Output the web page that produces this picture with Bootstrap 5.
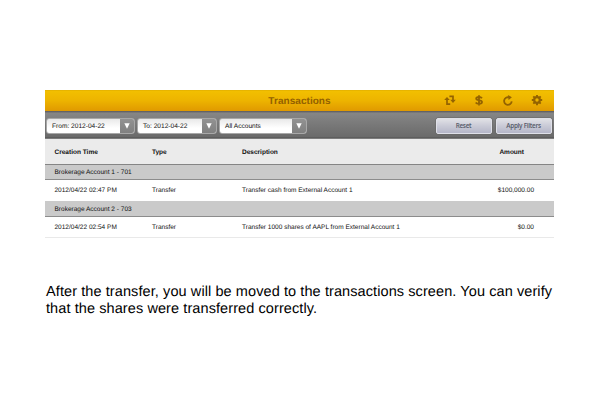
<!DOCTYPE html>
<html lang="en">
<head>
<meta charset="utf-8">
<meta name="viewport" content="width=device-width, initial-scale=1">
<title>Transactions</title>
<link href="https://cdn.jsdelivr.net/npm/bootstrap@5.3.0/dist/css/bootstrap.min.css" rel="stylesheet">
<style>
body { font-family: "Liberation Sans", Arial, sans-serif; font-size: 6.52px; line-height: 1; color: #111; background: #fff; overflow: hidden; text-rendering: geometricPrecision; }
.page { padding: 90px 46px 0 45px; }
.titlebar { height: 21px; background: linear-gradient(#dcaa00 0, #f2bf00 1px, #edb400 50%, #e09900); display: grid; grid-template-columns: 1fr auto 1fr; }
.titlebar h1 { font-size: 10px; letter-spacing: .05px; line-height: 1; padding-top: 2px; color: #926000; }
.tools { color: #946300; padding-right: 11px; gap: 17px; }
.tools svg { display: block; width: 12px; height: 12px; }
.filters { height: 28px; padding: 1px 2px 0 1px; gap: 2px; background: linear-gradient(#5c5c62 0, #69696b 1px, #868686 2px, #6a6a6a 26px, #505050 27px, #a8a8a8 28px); }
.picker { height: 16px; border: 1px solid #a8a8a8; border-radius: 3px; background: linear-gradient(#e9e9e9, #fff 65%); overflow: hidden; }
.picker .value { padding: 3px 0 0 5px; font-size: 6.6px; }
.picker .arrow { width: 14px; background: linear-gradient(#929292, #808080); color: #fff; }
.picker svg { width: 6px; height: 6px; display: block; }
.p-date1 { width: 89px; } .p-date2 { width: 80px; } .p-acct { width: 88px; }
.btn-filter { width: 56px; height: 16px; padding: 1px 1px 0 0; font: 600 6.4px/1 "Open Sans", sans-serif; letter-spacing: -.28px; color: #555a68; border: 1px solid #dfe0e8; border-radius: 2px; background: linear-gradient(#e1e1e6, #c9cad6 50%, #b5b6c8); box-shadow: 0 0 0 .5px #666; }
.cols { display: grid; grid-template-columns: 97.5px 90px 1fr auto; align-items: center; padding: 2px 20px 0 9.5px; }
.head { height: 25px; background: #ebebeb; padding-right: 30px; padding-top: 4px; }
.group { height: 16px; padding-left: 9.5px; padding-top: 3px; background: #cacaca; border-bottom: 1px solid #8c8c8c; }
.group.first { border-top: 1px solid #858585; }
.line { height: 21px; }
.line.last { border-bottom: 1px solid #e9e9e9; }
.caption-text { margin: 46px 0 0 1px; font-size: 14.5px; line-height: 17px; color: #000; white-space: nowrap; letter-spacing: .09px; }
</style>
<script src="https://cdn.jsdelivr.net/npm/bootstrap@5.3.0/dist/js/bootstrap.bundle.min.js"></script>
</head>
<body>
<main class="page">
  <section>
    <header class="titlebar align-items-center">
      <span></span>
      <h1 class="fw-bold m-0">Transactions</h1>
      <div class="tools d-flex justify-content-end">
        <svg viewBox="0 0 12 12" fill="none" stroke="currentColor" stroke-width="1.7"><path d="M3 3.8V9.2H6.2M5.4 1.4H9V5.5"/><path d="M.2 5.1 3 1.9 5.8 5.1zM6.2 4.7H11.8L9 7.9z" fill="currentColor" stroke="none"/></svg>
        <svg viewBox="0 0 12 12" fill="none" stroke="currentColor" stroke-width="1.8"><path d="M9 3.2C8.3 2.3 7.2 2 6 2 4.4 2 3.2 2.6 3.2 3.7 3.2 5.8 9 4.4 9 7 9 8.2 7.8 8.8 6 8.8 4.6 8.8 3.4 8.4 2.7 7.4M6 .2V10.5"/></svg>
        <svg viewBox="0 0 12 12" fill="none" stroke="currentColor" stroke-width="1.8"><path d="M9.7 6.4A3.8 3.8 0 1 1 7 2.4"/><path d="M5.9 0 9.9 2.3 6.6 5.1z" fill="currentColor" stroke="none"/></svg>
        <svg viewBox="0 0 12 12" fill="none" stroke="currentColor"><circle cx="6" cy="5" r="2.8" stroke-width="2.2"/><path d="M6-.2V2M6 8V10.2M.8 5H3M9 5H11.2M2.3 1.3 3.8 2.8M8.2 7.2 9.7 8.7M9.7 1.3 8.2 2.8M3.8 7.2 2.3 8.7" stroke-width="1.9"/></svg>
      </div>
    </header>
    <div class="filters d-flex align-items-center">
      <div class="picker p-date1 d-flex"><span class="value flex-grow-1 align-self-center">From: 2012-04-22</span><span class="arrow d-flex align-items-center justify-content-center"><svg viewBox="0 0 6 6" fill="currentColor"><path d="M.3.3H5.7L3 5.8z"/></svg></span></div>
      <div class="picker p-date2 d-flex"><span class="value flex-grow-1 align-self-center">To: 2012-04-22</span><span class="arrow d-flex align-items-center justify-content-center"><svg viewBox="0 0 6 6" fill="currentColor"><path d="M.3.3H5.7L3 5.8z"/></svg></span></div>
      <div class="picker p-acct d-flex"><span class="value flex-grow-1 align-self-center">All Accounts</span><span class="arrow d-flex align-items-center justify-content-center"><svg viewBox="0 0 6 6" fill="currentColor"><path d="M.3.3H5.7L3 5.8z"/></svg></span></div>
      <div class="d-flex ms-auto gap-1">
        <button type="button" class="btn btn-filter">Reset</button>
        <button type="button" class="btn btn-filter">Apply Filters</button>
      </div>
    </div>
    <div class="cols head fw-bold"><span>Creation Time</span><span>Type</span><span>Description</span><span>Amount</span></div>
    <div class="group first d-flex align-items-center">Brokerage Account 1 - 701</div>
    <div class="cols line"><span>2012/04/22 02:47 PM</span><span>Transfer</span><span>Transfer cash from External Account 1</span><span>$100,000.00</span></div>
    <div class="group d-flex align-items-center">Brokerage Account 2 - 703</div>
    <div class="cols line last"><span>2012/04/22 02:54 PM</span><span>Transfer</span><span>Transfer 1000 shares of AAPL from External Account 1</span><span>$0.00</span></div>
  </section>
  <p class="caption-text">After the transfer, you will be moved to the transactions screen. You can verify<br>that the shares were transferred correctly.</p>
</main>
</body>
</html>
